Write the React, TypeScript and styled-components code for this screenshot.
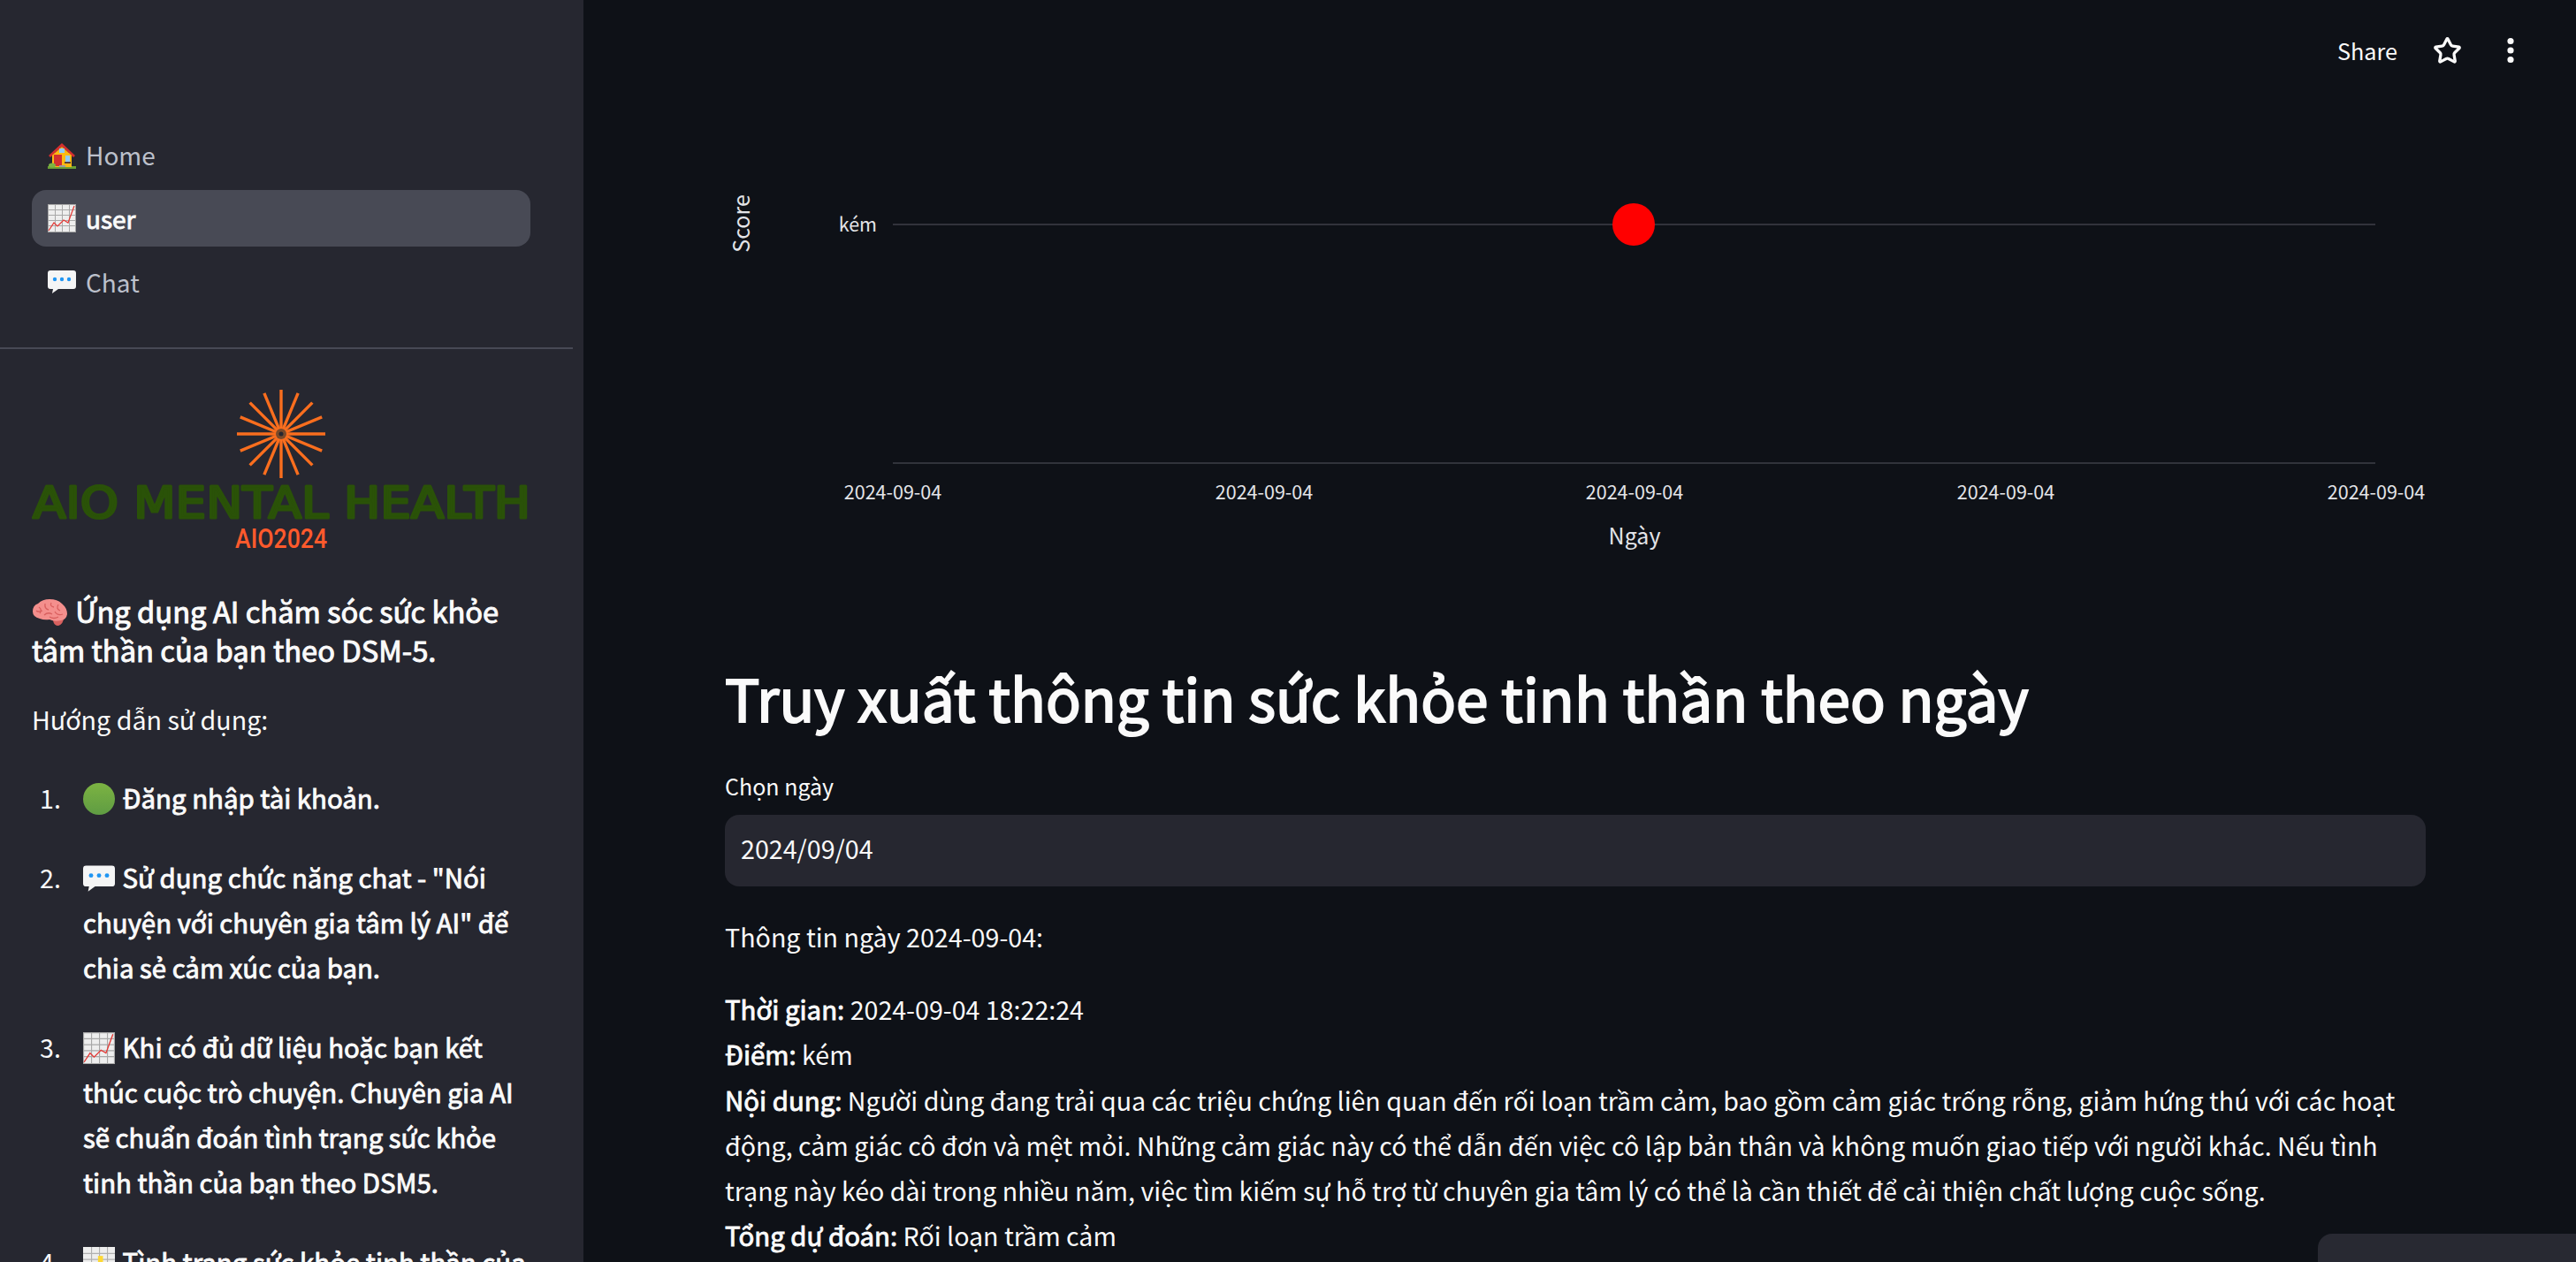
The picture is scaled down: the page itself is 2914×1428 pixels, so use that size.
import { createGlobalStyle, styled } from "styled-components";
import { Star, EllipsisVertical } from "lucide-react";

const FONT = `"Noto Sans CJK JP", "Noto Sans", sans-serif`;

const GlobalStyle = createGlobalStyle`
  html, body {
    margin: 0;
    height: 100%;
    background: #0e1117;
  }
  body {
    font-family: ${FONT};
    color: #fafafa;
    overflow: hidden;
  }
`;

const HouseEmoji = () => (
  <svg viewBox="0 0 32 32" width="32" height="32">
    <rect x="0" y="29" width="32" height="3" fill="#6a9f35" />
    <rect x="5" y="14" width="22" height="16" fill="#fdb913" />
    <path d="M16 3 L31 17 L29 19 L16 7 L3 19 L1 17 Z" fill="#d32f2f" />
    <path d="M16 7 L27 17 H5 Z" fill="#fdb913" />
    <rect x="13" y="9" width="6" height="5" fill="#90caf9" />
    <rect x="7" y="16" width="9" height="13" fill="#d32f2f" />
    <rect x="20" y="17" width="5" height="7" fill="#90caf9" />
    <rect x="19" y="24" width="7" height="2" fill="#5d4037" />
    <ellipse cx="5" cy="28" rx="4" ry="2.5" fill="#7cb342" />
    <rect x="13" y="28" width="7" height="2" fill="#9e9e9e" />
  </svg>
);

const ChartEmoji = ({ size }: { size: number }) => (
  <svg viewBox="0 0 32 32" width={size} height={size}>
    <rect width="32" height="32" fill="#eeeeee" />
    <path
      d="M0 .5H32M0 6.5H32M0 12.5H32M0 18.5H32M0 24.5H32M0 31.5H32M.5 0V32M8.5 0V32M16.5 0V32M24.5 0V32M31.5 0V32"
      stroke="#a8a8a8"
      strokeWidth="1"
      fill="none"
    />
    <path d="M1 30 L7 21 L11 25 L18 18 L23 21 L30 2" stroke="#e53935" strokeWidth="1.2" fill="none" />
  </svg>
);

const BubbleEmoji = ({ size }: { size: number }) => (
  <svg viewBox="0 0 32 32" width={size} height={size}>
    <path
      d="M3 3H29a3 3 0 0 1 3 3V21a3 3 0 0 1-3 3H12L5 29L6 24H3a3 3 0 0 1-3-3V6a3 3 0 0 1 3-3Z"
      fill="#f5f5f5"
    />
    <circle cx="8" cy="13" r="2.2" fill="#2196f3" />
    <circle cx="16" cy="13" r="2.2" fill="#2196f3" />
    <circle cx="24" cy="13" r="2.2" fill="#2196f3" />
  </svg>
);

const BrainEmoji = () => (
  <svg viewBox="0 0 41 32" width="41" height="32">
    <path d="M24 25 Q32 25 36 21 Q36 29 30 31 Q25 31 24 25Z" fill="#d8615f" />
    <path
      d="M1 15 Q1 8 7 6 Q12 1 20 1 Q29 1 34 6 Q40 11 40 18 Q39 24 33 25 Q26 27 20 24 Q14 25 9 23 Q1 21 1 15Z"
      fill="#f48f8d"
    />
    <path
      d="M8 10 Q12 13 9 17 M15 6 Q14 12 19 13 M22 5 Q20 9 25 10 M30 7 Q27 12 32 14 M14 19 Q18 15 23 18 M26 15 Q29 20 35 18 M5 14 Q7 16 12 14 M20 21 Q25 24 30 21"
      stroke="#d9605f"
      strokeWidth="1.3"
      fill="none"
    />
  </svg>
);

const GreenDot = () => (
  <svg viewBox="0 0 36 36" width="36" height="36">
    <defs>
      <linearGradient id="greenDot" x1="0" y1="0" x2="0" y2="1">
        <stop offset="0" stopColor="#7cb342" />
        <stop offset="1" stopColor="#5f9c43" />
      </linearGradient>
    </defs>
    <circle cx="18" cy="18" r="18" fill="url(#greenDot)" />
  </svg>
);

const BarsEmoji = () => (
  <svg viewBox="0 0 32 32" width="36" height="36">
    <rect width="32" height="32" fill="#eeeeee" />
    <path d="M0 6.5H32M0 12.5H32M8.5 0V32M16.5 0V32M24.5 0V32" stroke="#b0b0b0" fill="none" />
    <rect x="4" y="18" width="5" height="14" fill="#42a5f5" />
    <rect x="15" y="9" width="5" height="23" fill="#fdd835" />
  </svg>
);

const rays = Array.from({ length: 16 }, (_, i) => (i * 360) / 16);

const Logo = () => (
  <LogoSvg viewBox="36 420 564 210">
    {rays.map((a) => (
      <line
        key={a}
        x1="318"
        y1="488"
        x2="318"
        y2="442"
        stroke="#fa6e1e"
        strokeWidth="3.4"
        transform={`rotate(${a} 318 492)`}
      />
    ))}
    <circle cx="318" cy="492" r="6" fill="#7a4a2a" />
    <circle cx="318" cy="492" r="2.5" fill="#262730" />
    <text
      x="37"
      y="587"
      textLength="563"
      lengthAdjust="spacingAndGlyphs"
      fontFamily="'DejaVu Sans', sans-serif"
      fontWeight="400"
      fontSize="50"
      fill="#2a5208"
      stroke="#2a5208"
      strokeWidth="3"
      strokeLinejoin="round"
    >
      AIO MENTAL HEALTH
    </text>
    <text
      x="266"
      y="621"
      textLength="104"
      lengthAdjust="spacingAndGlyphs"
      fontFamily="Roboto, sans-serif"
      fontWeight="500"
      fontSize="32"
      fill="#ff5a2c"
    >
      AIO2024
    </text>
  </LogoSvg>
);

const dateTicks = [1010, 1430, 1849, 2269, 2688];

const ScoreChart = () => (
  <ChartSvg viewBox="820 114 1924 520">
    <line x1="1010" y1="254" x2="2687" y2="254" stroke="#31333b" strokeWidth="2" />
    <line x1="1010" y1="524" x2="2687" y2="524" stroke="#31333b" strokeWidth="2" />
    <circle cx="1848" cy="254" r="24" fill="#ff0000" />
    <AxisText x="992" y="262" textAnchor="end">
      kém
    </AxisText>
    <AxisTitle transform="translate(848 253) rotate(-90)" textAnchor="middle">
      Score
    </AxisTitle>
    {dateTicks.map((x) => (
      <AxisText key={x} x={x} y="565" textAnchor="middle">
        2024-09-04
      </AxisText>
    ))}
    <AxisTitle x="1849" y="616" textAnchor="middle">
      Ngày
    </AxisTitle>
  </ChartSvg>
);

export default function App() {
  return (
    <Shell>
      <GlobalStyle />
      <Sidebar>
        <Nav>
          <NavItem>
            <HouseEmoji />
            Home
          </NavItem>
          <NavItem $active>
            <ChartEmoji size={32} />
            user
          </NavItem>
          <NavItem>
            <BubbleEmoji size={32} />
            Chat
          </NavItem>
        </Nav>
        <SideBody>
          <Logo />
          <SideHeading>
            <BrainEmoji /> Ứng dụng AI chăm sóc sức khỏe tâm thần của bạn theo DSM-5.
          </SideHeading>
          <SideText>Hướng dẫn sử dụng:</SideText>
          <Steps>
            <Step>
              <StepNumber>1.</StepNumber>
              <StepBody>
                <GreenDot /> Đăng nhập tài khoản.
              </StepBody>
            </Step>
            <Step>
              <StepNumber>2.</StepNumber>
              <StepBody>
                <BubbleEmoji size={36} /> Sử dụng chức năng chat - "Nói chuyện với chuyên gia tâm lý AI" để chia sẻ cảm
                xúc của bạn.
              </StepBody>
            </Step>
            <Step>
              <StepNumber>3.</StepNumber>
              <StepBody>
                <ChartEmoji size={36} /> Khi có đủ dữ liệu hoặc bạn kết thúc cuộc trò chuyện. Chuyên gia AI sẽ chuẩn đoán
                tình trạng sức khỏe tinh thần của bạn theo DSM5.
              </StepBody>
            </Step>
            <Step>
              <StepNumber>4.</StepNumber>
              <StepBody>
                <BarsEmoji /> Tình trạng sức khỏe tinh thần của bạn sẽ được lưu lại.
              </StepBody>
            </Step>
          </Steps>
        </SideBody>
      </Sidebar>
      <Main>
        <Toolbar>
          <ShareLabel>Share</ShareLabel>
          <Star size={33} strokeWidth={2.4} color="#fafafa" />
          <DotsIcon size={36} strokeWidth={2.8} color="#fafafa" fill="#fafafa" />
        </Toolbar>
        <ScoreChart />
        <Title>Truy xuất thông tin sức khỏe tinh thần theo ngày</Title>
        <FieldLabel>Chọn ngày</FieldLabel>
        <DateInput>2024/09/04</DateInput>
        <Paragraph>Thông tin ngày 2024-09-04:</Paragraph>
        <Details>
          <b>Thời gian:</b> 2024-09-04 18:22:24
          <br />
          <b>Điểm:</b> kém
          <br />
          <b>Nội dung:</b> Người dùng đang trải qua các triệu chứng liên quan đến rối loạn trầm cảm, bao gồm cảm giác
          trống rỗng, giảm hứng thú với các hoạt động, cảm giác cô đơn và mệt mỏi. Những cảm giác này có thể dẫn đến việc
          cô lập bản thân và không muốn giao tiếp với người khác. Nếu tình trạng này kéo dài trong nhiều năm, việc tìm
          kiếm sự hỗ trợ từ chuyên gia tâm lý có thể là cần thiết để cải thiện chất lượng cuộc sống.
          <br />
          <b>Tổng dự đoán:</b> Rối loạn trầm cảm
        </Details>
      </Main>
      <ChatDock />
    </Shell>
  );
}

const Shell = styled.div`
  display: flex;
  height: 100vh;
  overflow: hidden;
`;

const Sidebar = styled.aside`
  flex: 0 0 660px;
  background: #262730;
  overflow: hidden;
`;

const Nav = styled.nav`
  display: flex;
  flex-direction: column;
  gap: 8px;
  padding: 143px 60px 42px 36px;
`;

const NavItem = styled.div<{ $active?: boolean }>`
  display: flex;
  align-items: center;
  gap: 11px;
  height: 64px;
  padding-left: 18px;
  border-radius: 16px;
  font-size: 28px;
  -webkit-text-stroke: ${(p) => (p.$active ? "0.9px #fafafa" : "0")};
  color: ${(p) => (p.$active ? "#fafafa" : "#bcc0cb")};
  background: ${(p) => (p.$active ? "#484a55" : "transparent")};
`;

const SideBody = styled.div`
  margin-right: 12px;
  padding: 24px 48px 0 36px;
  border-top: 2px solid #474955;
`;

const LogoSvg = styled.svg`
  display: block;
  width: 564px;
  height: 210px;
`;

const SideHeading = styled.h3`
  margin: 40px 0 0;
  font-size: 32.7px;
  line-height: 44px;
  font-weight: 400;
  -webkit-text-stroke: 1px #fafafa;
  svg {
    vertical-align: -4px;
    margin-right: 1px;
  }
`;

const SideText = styled.p`
  margin: 31px 0 0;
  font-size: 28.65px;
  line-height: 51px;
`;

const Steps = styled.ol`
  list-style: none;
  margin: 38px 0 0;
  padding: 0;
  display: flex;
  flex-direction: column;
  gap: 38.4px;
`;

const Step = styled.li`
  display: flex;
  font-size: 28.65px;
  line-height: 51.2px;
`;

const StepNumber = styled.span`
  flex: 0 0 58px;
  padding-left: 9px;
  box-sizing: border-box;
`;

const StepBody = styled.div`
  flex: 1;
  font-size: 29.4px;
  -webkit-text-stroke: 0.9px #fafafa;
  svg {
    vertical-align: -7px;
    margin-right: 2px;
  }
`;

const Main = styled.main`
  flex: 1;
  min-width: 0;
  padding: 0 170px 0 160px;
`;

const Toolbar = styled.header`
  display: flex;
  align-items: center;
  justify-content: flex-end;
  gap: 40px;
  height: 114px;
  margin-right: -114px;
`;

const ShareLabel = styled.span`
  font-size: 25.2px;
`;

const DotsIcon = styled(EllipsisVertical)`
  margin-left: -3px;
`;

const ChartSvg = styled.svg`
  display: block;
  width: 1924px;
  height: 520px;
  overflow: visible;
`;

const AxisText = styled.text`
  font-family: ${FONT};
  font-size: 21.5px;
  fill: #e3e4e8;
`;

const AxisTitle = styled.text`
  font-family: ${FONT};
  font-size: 25px;
  fill: #e3e4e8;
`;

const Title = styled.h1`
  margin: 112px 0 0;
  font-size: 65.7px;
  line-height: 86px;
  font-weight: 400;
  -webkit-text-stroke: 2px #fafafa;
`;

const FieldLabel = styled.div`
  margin-top: 35px;
  font-size: 25px;
  line-height: 44px;
`;

const DateInput = styled.div`
  display: flex;
  align-items: center;
  height: 81px;
  margin-top: 11px;
  padding: 0 0 7px 18px;
  box-sizing: border-box;
  border-radius: 16px;
  background: #262730;
  font-size: 28.65px;
`;

const Paragraph = styled.p`
  margin: 31px 0 0;
  font-size: 28.65px;
  line-height: 51.2px;
`;

const Details = styled.p`
  margin: 31px 0 0;
  font-size: 28.6px;
  line-height: 51.2px;
  b {
    font-size: 29.4px;
    font-weight: 400;
    -webkit-text-stroke: 0.9px #fafafa;
  }
`;

const ChatDock = styled.div`
  position: fixed;
  right: 0;
  bottom: 0;
  width: 292px;
  height: 32px;
  border-top-left-radius: 16px;
  background: #282932;
`;
